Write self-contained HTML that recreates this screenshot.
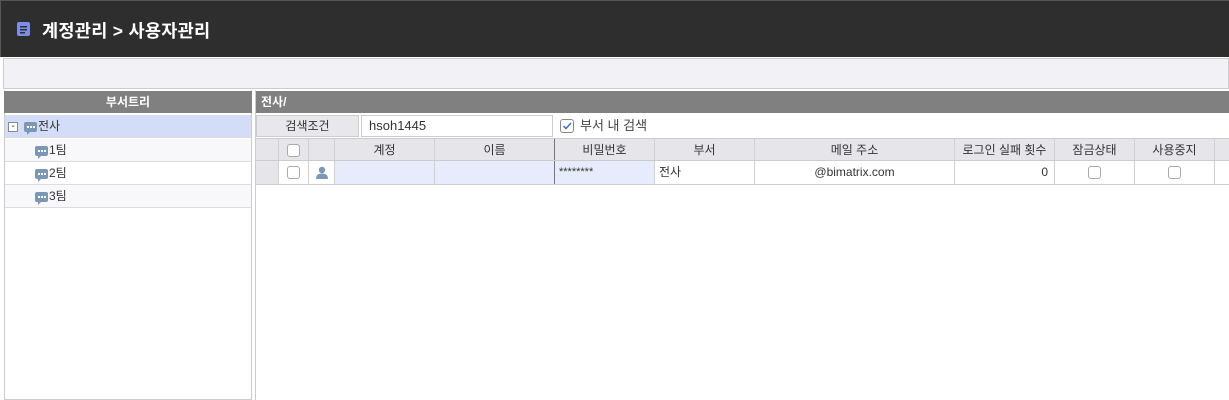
<!DOCTYPE html>
<html><head><meta charset="utf-8"><style>
*{box-sizing:border-box;margin:0;padding:0}
body{width:1229px;height:400px;overflow:hidden;background:#fff;font-family:"Liberation Sans","Noto Sans CJK KR",sans-serif;font-size:12px;color:#333;position:relative}
.a{position:absolute}
.hdr{left:0;top:0;width:1229px;height:57px;background:#2e2e2e;border-left:1px solid #555;border-top:1px solid #555}
.title{left:42px;top:18px;color:#fff;font-size:17.5px;font-weight:bold;letter-spacing:0.3px}
.tb{left:3px;top:58px;width:1226px;height:31px;background:#f2f2f6;border:1px solid #ccc}
.ph{background:#808080;color:#fff;font-weight:bold;height:22px;line-height:22px}
.tr{left:5px;width:246px;height:23px;border-bottom:1px solid #ddd;line-height:22px}
.cell{position:absolute;top:0;height:100%;border-right:1px solid #d0d0d0;text-align:center}
.cb{display:inline-block;width:13px;height:13px;border:1px solid #aaa;border-radius:3px;background:#fff;vertical-align:middle}
.ic{display:inline-block;width:13px;height:10px;background:#7b97b6;border-radius:2px;vertical-align:middle;position:relative;margin-right:1px}
.ic:after{content:"";position:absolute;left:3px;top:10px;border-left:3px solid #7b97b6;border-bottom:3px solid transparent}
.ic i{position:absolute;top:4px;width:2px;height:2px;background:#fff}
</style></head><body>
<div class="a hdr"></div>
<svg class="a" style="left:17px;top:22px" width="13" height="14"><rect width="13" height="14" rx="2" fill="#7d8ee8"/><rect x="3" y="4" width="7" height="1.5" fill="#2e2e2e"/><rect x="3" y="7" width="7" height="1.5" fill="#2e2e2e"/><rect x="3" y="10" width="5" height="1.5" fill="#2e2e2e"/></svg>
<div class="a title">계정관리 &gt; 사용자관리</div>
<div class="a tb"></div>
<div class="a" style="left:4px;top:90px;width:248px;height:310px;border:1px solid #ccc;border-top:none"></div>
<div class="a ph" style="left:4px;top:91px;width:248px;text-align:center">부서트리</div>
<div class="a tr" style="top:115px;background:#d3ddf8"><span style="display:inline-block;width:10px;height:10px;border:1px solid #888;margin:0 6px 0 3px;vertical-align:middle;line-height:7px;font-size:10px;text-align:center;background:#fff">-</span><span class="ic"><i style="left:3px"></i><i style="left:6px"></i><i style="left:9px"></i></span>전사</div>
<div class="a tr" style="top:139px;background:#f8f8fb;padding-left:30px"><span class="ic"><i style="left:3px"></i><i style="left:6px"></i><i style="left:9px"></i></span>1팀</div>
<div class="a tr" style="top:162px;padding-left:30px"><span class="ic"><i style="left:3px"></i><i style="left:6px"></i><i style="left:9px"></i></span>2팀</div>
<div class="a tr" style="top:185px;background:#f8f8fb;padding-left:30px"><span class="ic"><i style="left:3px"></i><i style="left:6px"></i><i style="left:9px"></i></span>3팀</div>
<div class="a" style="left:255px;top:90px;width:974px;height:310px;border-left:1px solid #ccc"></div>
<div class="a ph" style="left:256px;top:91px;width:973px;padding-left:5px">전사/</div>
<div class="a" style="left:256px;top:115px;width:103px;height:22px;background:#e8e8ec;border:1px solid #ccc;text-align:center;line-height:20px">검색조건</div>
<div class="a" style="left:361px;top:115px;width:192px;height:22px;border:1px solid #ccc;padding-left:7px;line-height:20px;font-size:13px">hsoh1445</div>
<div class="a" style="left:560px;top:119px;width:14px;height:14px;border:1px solid #888;border-radius:3px"><svg width="12" height="12" style="position:absolute;left:0;top:0"><path d="M2.5 6 L5 8.5 L10 3" stroke="#3b6fd6" stroke-width="1.5" fill="none"/></svg></div>
<div class="a" style="left:580px;top:118px;font-size:13px;color:#444;line-height:16px">부서 내 검색</div>
<div class="a" style="left:256px;top:138px;width:973px;height:23px;background:#e6e6ea;border-top:1px solid #ccc;border-bottom:1px solid #ccc;line-height:22px">
<div class="cell" style="left:0;width:23px"></div>
<div class="cell" style="left:23px;width:30px"><span class="cb"></span></div>
<div class="cell" style="left:53px;width:26px"></div>
<div class="cell" style="left:79px;width:100px">계정</div>
<div class="cell" style="left:179px;width:120px;border-right:1px solid #777">이름</div>
<div class="cell" style="left:299px;width:100px">비밀번호</div>
<div class="cell" style="left:399px;width:100px">부서</div>
<div class="cell" style="left:499px;width:200px">메일 주소</div>
<div class="cell" style="left:699px;width:100px">로그인 실패 횟수</div>
<div class="cell" style="left:799px;width:80px">잠금상태</div>
<div class="cell" style="left:879px;width:80px">사용중지</div>
</div>
<div class="a" style="left:256px;top:161px;width:973px;height:24px;border-bottom:1px solid #ccc;line-height:23px">
<div class="cell" style="left:0;width:23px;background:#e6e6ea"></div>
<div class="cell" style="left:23px;width:30px"><span class="cb"></span></div>
<div class="cell" style="left:53px;width:26px"><svg width="14" height="13" style="vertical-align:middle"><circle cx="7" cy="4" r="3.2" fill="#7b97b6"/><path d="M1 13 Q1 7.5 7 7.5 Q13 7.5 13 13Z" fill="#7b97b6"/></svg></div>
<div class="cell" style="left:79px;width:100px;background:#e6ecfb"></div>
<div class="cell" style="left:179px;width:120px;background:#e6ecfb;border-right:1px solid #777"></div>
<div class="cell" style="left:299px;width:100px;background:#e6ecfb;text-align:left;padding-left:4px;font-size:11px">********</div>
<div class="cell" style="left:399px;width:100px;text-align:left;padding-left:4px">전사</div>
<div class="cell" style="left:499px;width:200px">@bimatrix.com</div>
<div class="cell" style="left:699px;width:100px;text-align:right;padding-right:6px">0</div>
<div class="cell" style="left:799px;width:80px"><span class="cb"></span></div>
<div class="cell" style="left:879px;width:80px"><span class="cb"></span></div>
</div>
</body></html>
